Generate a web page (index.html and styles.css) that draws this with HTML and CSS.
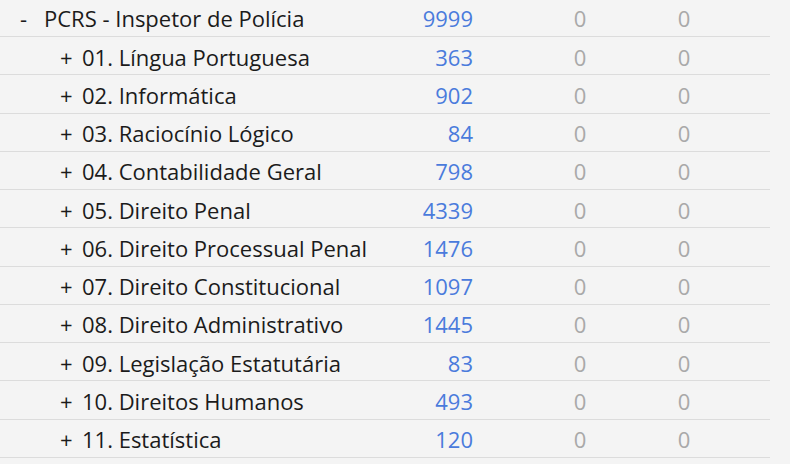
FILE: index.html
```html
<!DOCTYPE html>
<html lang="pt">
<head>
    <meta charset="UTF-8">
    <title>Disciplinas</title>
    <link rel="stylesheet" href="styles.css">
</head>
<body>
    <div class="tree">
        <div class="row root">
            <span class="name"><span class="toggle">-</span>PCRS - Inspetor de Polícia</span>
            <span class="count">9999</span>
            <span class="zero">0</span>
            <span class="zero">0</span>
        </div>
        <div class="row child">
            <span class="name"><span class="toggle">+</span>01. Língua Portuguesa</span>
            <span class="count">363</span>
            <span class="zero">0</span>
            <span class="zero">0</span>
        </div>
        <div class="row child">
            <span class="name"><span class="toggle">+</span>02. Informática</span>
            <span class="count">902</span>
            <span class="zero">0</span>
            <span class="zero">0</span>
        </div>
        <div class="row child">
            <span class="name"><span class="toggle">+</span>03. Raciocínio Lógico</span>
            <span class="count">84</span>
            <span class="zero">0</span>
            <span class="zero">0</span>
        </div>
        <div class="row child">
            <span class="name"><span class="toggle">+</span>04. Contabilidade Geral</span>
            <span class="count">798</span>
            <span class="zero">0</span>
            <span class="zero">0</span>
        </div>
        <div class="row child">
            <span class="name"><span class="toggle">+</span>05. Direito Penal</span>
            <span class="count">4339</span>
            <span class="zero">0</span>
            <span class="zero">0</span>
        </div>
        <div class="row child">
            <span class="name"><span class="toggle">+</span>06. Direito Processual Penal</span>
            <span class="count">1476</span>
            <span class="zero">0</span>
            <span class="zero">0</span>
        </div>
        <div class="row child">
            <span class="name"><span class="toggle">+</span>07. Direito Constitucional</span>
            <span class="count">1097</span>
            <span class="zero">0</span>
            <span class="zero">0</span>
        </div>
        <div class="row child">
            <span class="name"><span class="toggle">+</span>08. Direito Administrativo</span>
            <span class="count">1445</span>
            <span class="zero">0</span>
            <span class="zero">0</span>
        </div>
        <div class="row child">
            <span class="name"><span class="toggle">+</span>09. Legislação Estatutária</span>
            <span class="count">83</span>
            <span class="zero">0</span>
            <span class="zero">0</span>
        </div>
        <div class="row child">
            <span class="name"><span class="toggle">+</span>10. Direitos Humanos</span>
            <span class="count">493</span>
            <span class="zero">0</span>
            <span class="zero">0</span>
        </div>
        <div class="row child">
            <span class="name"><span class="toggle">+</span>11. Estatística</span>
            <span class="count">120</span>
            <span class="zero">0</span>
            <span class="zero">0</span>
        </div>
    </div>
</body>
</html>
```

FILE: styles.css
```css
* {
    margin: 0;
    padding: 0;
    box-sizing: border-box;
}

body {
    background: #f4f4f4;
    color: #1b1b1b;
    font-family: 'Open Sans', 'Noto Sans', sans-serif;
    font-size: 22px;
    overflow: hidden;
}

.tree {
    width: 770px;
    margin-top: -1.3px;
}

.row {
    display: grid;
    grid-template-columns: 410px 63px 55px 104px 104px 1fr;
    align-items: center;
    height: 38.27px;
    padding-top: 2px;
    border-bottom: 1px solid #dcdcdc;
}

.name {
    grid-column: 1;
    white-space: nowrap;
}

.root .name {
    padding-left: 20px;
}

.child .name {
    padding-left: 60px;
}

.toggle {
    display: inline-block;
    width: 24px;
}

.child .toggle {
    width: 22px;
}

.count {
    grid-column: 2;
    text-align: right;
    color: #4a7bdc;
}

.zero {
    text-align: center;
    color: #a9a9a9;
}

.row .zero:nth-of-type(3) {
    grid-column: 4;
}

.row .zero:nth-of-type(4) {
    grid-column: 5;
}
```
